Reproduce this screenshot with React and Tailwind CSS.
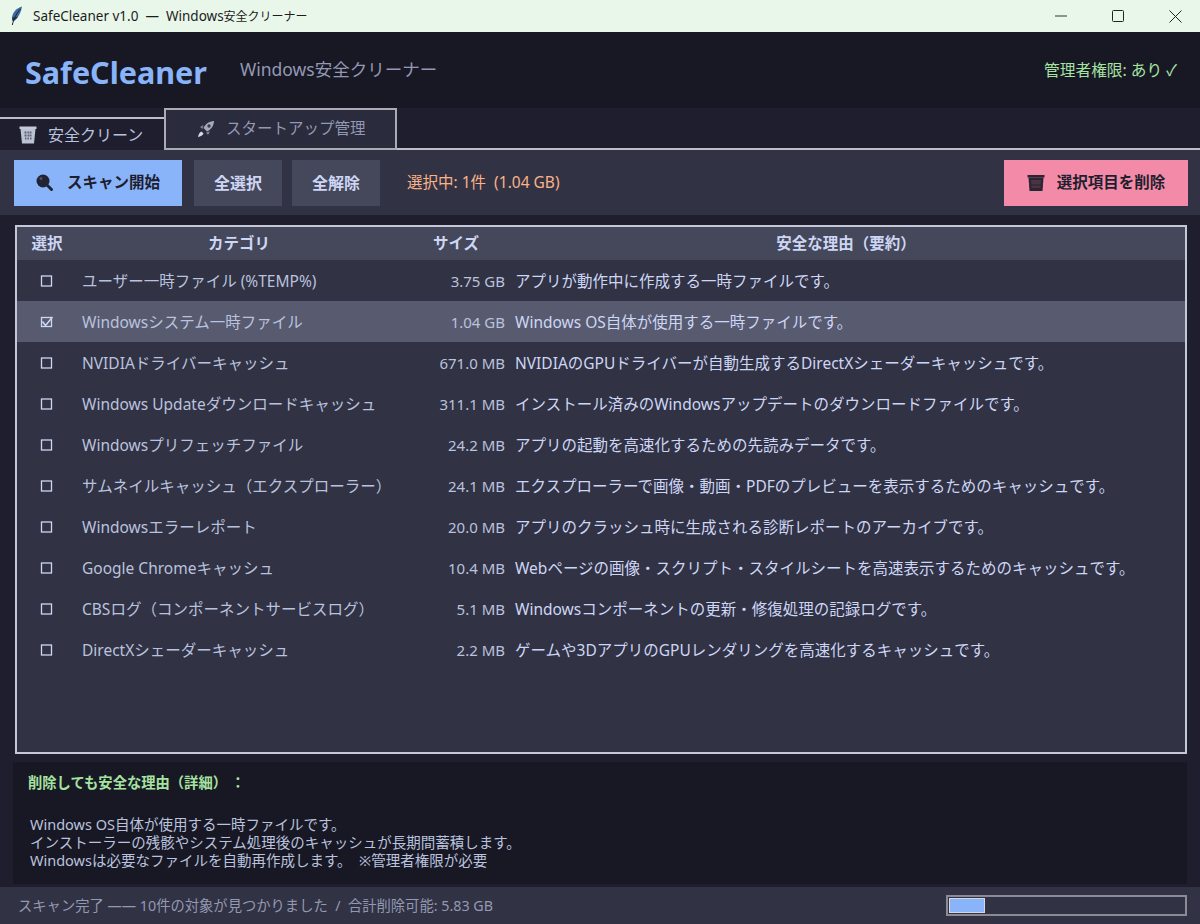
import React from 'react';

const rows = [
    ['ユーザー一時ファイル (%TEMP%)', '3.75 GB', 'アプリが動作中に作成する一時ファイルです。'],
    ['Windowsシステム一時ファイル', '1.04 GB', 'Windows OS自体が使用する一時ファイルです。', true],
    ['NVIDIAドライバーキャッシュ', '671.0 MB', 'NVIDIAのGPUドライバーが自動生成するDirectXシェーダーキャッシュです。'],
    ['Windows Updateダウンロードキャッシュ', '311.1 MB', 'インストール済みのWindowsアップデートのダウンロードファイルです。'],
    ['Windowsプリフェッチファイル', '24.2 MB', 'アプリの起動を高速化するための先読みデータです。'],
    ['サムネイルキャッシュ（エクスプローラー）', '24.1 MB', 'エクスプローラーで画像・動画・PDFのプレビューを表示するためのキャッシュです。'],
    ['Windowsエラーレポート', '20.0 MB', 'アプリのクラッシュ時に生成される診断レポートのアーカイブです。'],
    ['Google Chromeキャッシュ', '10.4 MB', 'Webページの画像・スクリプト・スタイルシートを高速表示するためのキャッシュです。'],
    ['CBSログ（コンポーネントサービスログ）', '5.1 MB', 'Windowsコンポーネントの更新・修復処理の記録ログです。'],
    ['DirectXシェーダーキャッシュ', '2.2 MB', 'ゲームや3DアプリのGPUレンダリングを高速化するキャッシュです。'],
];

const Feather = () => (
    <svg width="12" height="20" viewBox="0 0 12 20" className="shrink-0">
        <path d="M11 0.500C5.500 2 1.500 6.500 1 11.500c-.1 1.500.3 2.800 1 3.700C6.500 13 10 7 11 0.500z" fill="#3d6a9e" />
        <path d="M1 11.500c-.1 1.500.3 2.800 1 3.700 2-1 3.800-2.800 5.300-4.800z" fill="#28405f" />
        <path d="M9.500 3C6 7 3 11.500 1.300 19" stroke="#1b2430" strokeWidth="1" fill="none" />
    </svg>
);

const TrashLight = () => (
    <svg width="18" height="18" viewBox="0 0 18 18" className="shrink-0">
        <rect x="0.500" y="0.500" width="17" height="2.500" fill="#c3c8d6" />
        <path d="M1.500 3h15l-1.500 14.500H3z" fill="#bcc2d2" />
        <path d="M5.500 5.500h2v2h-2zM8.500 5.500h2v2h-2zM11 5.500h1.500v2H11zM5.500 8.500h2v2h-2zM8.500 8.500h2v2h-2zM11 8.500h1.500v2H11zM6 11.500h1.500v2H6zM8.500 11.500h1.500v2H8.500zM11 11.500h1.500v2H11z" fill="#5f6476" />
    </svg>
);

const TrashDark = () => (
    <svg width="18" height="18" viewBox="0 0 18 18" className="shrink-0">
        <rect x="0.500" y="1" width="17" height="2.500" fill="#2a2433" />
        <path d="M1.500 3.500h15l-1 13.500h-13z" fill="#2a2433" />
        <path d="M4 6h10l-.5 8h-9z" fill="#4a3342" />
        <path d="M4.200 11h9.600" stroke="#2a2433" strokeWidth="1" />
    </svg>
);

const Rocket = () => (
    <svg width="18" height="18" viewBox="0 0 18 18" className="shrink-0">
        <path d="M17 1c-5 .3-8.500 2.800-10.500 7l3.500 3.500C14.200 9.500 16.700 6 17 1z" fill="#a3aabf" />
        <circle cx="12" cy="6" r="1.700" fill="#3a3c4e" />
        <path d="M6.500 5 3 7l2.500 2zM13 11.500 11 15l-2-2.500z" fill="#7f859a" />
        <path d="M4.500 11.500C3 12 1.500 14 1 17c2.700-.4 4.800-1.800 5.500-3.500z" fill="#d7dbe6" />
    </svg>
);

const Magnifier = () => (
    <svg width="18" height="18" viewBox="0 0 18 18" className="shrink-0">
        <circle cx="7" cy="7" r="6.500" fill="#232433" />
        <path d="M11.500 11.500 15.500 15.500" stroke="#232433" strokeWidth="3" strokeLinecap="round" />
        <circle cx="5" cy="4.500" r="1.500" fill="#4c5066" />
    </svg>
);

const CheckBox = ({ checked }) => (
    <svg width="14" height="14" viewBox="0 0 14 14" className="shrink-0">
        <rect x="1.500" y={checked ? 2.500 : 2} width="10" height={checked ? 9 : 10} fill="none" stroke="#cdd6f4" strokeWidth="1.300" />
        {checked && <path d="M2.500 6.500l3 4L12.500 2" fill="none" stroke="#cdd6f4" strokeWidth="1.500" />}
    </svg>
);

const App = () => {
    return (
        <div className="w-[1200px] h-[924px] flex flex-col overflow-hidden bg-[#1e1e2e] text-[#cdd6f4] font-['Noto_Sans','Noto_Sans_CJK_JP',sans-serif]">
            {/* title bar */}
            <div className="h-8 shrink-0 bg-[#e8f7e9] flex items-center pl-[11px] text-[#1c1c1c] text-[13.500px]">
                <Feather />
                <span className="ml-[10px] whitespace-pre">SafeCleaner v1.0  —  Windows<span className="text-[12px]">安全クリーナー</span></span>
                <div className="ml-auto flex items-center">
                    <svg width="12" height="12" viewBox="0 0 12 12" className="mr-[45px]"><path d="M0 6h12" stroke="#333" strokeWidth="1" /></svg>
                    <svg width="12" height="12" viewBox="0 0 12 12" className="mr-[45px]"><rect x="0.500" y="0.500" width="11" height="11" rx="1" fill="none" stroke="#222" strokeWidth="1" /></svg>
                    <svg width="13" height="13" viewBox="0 0 13 13" className="mr-[18px]"><path d="M0.500 0.500l12 12M12.500 0.500l-12 12" stroke="#222" strokeWidth="1" /></svg>
                </div>
            </div>

            {/* header */}
            <div className="h-[76px] shrink-0 bg-[#181825] flex items-center pl-[25px] pr-[22px]">
                <span className="text-[30.500px] font-bold text-[#89b4fa] leading-none translate-y-[2px]">SafeCleaner</span>
                <span className="ml-[33px] text-[17.500px] text-[#9399b2] -translate-y-[1px]">Windows安全クリーナー</span>
                <span className="ml-auto text-[15.700px] text-[#a6e3a1] -translate-x-[1px] translate-y-[1px]">管理者権限: あり ✓</span>
            </div>

            {/* tabs */}
            <div className="h-[42px] shrink-0 flex items-end border-b-2 border-[#bdbfc8] relative">
                <div className="w-[164px] h-[33px] -mb-[2px] flex items-center pl-[19px] gap-[11px] border-t-2 border-[#bdbfc8] bg-[#1e1e2e] text-[16px] z-10">
                    <TrashLight />
                    <span className="text-[#bac2de]">安全クリーン</span>
                </div>
                <div className="w-[233px] h-[42px] -mb-[2px] flex items-center pl-[31px] gap-[11px] border-2 border-[#a9abb5] bg-[#2a2b3c] text-[15.500px] text-[#9399b2]">
                    <Rocket />
                    <span>スタートアップ管理</span>
                </div>
            </div>

            {/* toolbar */}
            <div className="h-[65px] shrink-0 bg-[#313244] flex items-center px-[14px]">
                <button className="w-[168px] h-[46px] bg-[#89b4fa] text-[#1e1e2e] text-[15.500px] font-bold flex items-center justify-center gap-[13px]">
                    <Magnifier />
                    スキャン開始
                </button>
                <button className="w-[88px] h-[46px] ml-3 bg-[#45475a] text-[#cdd6f4] text-[16px] font-bold">全選択</button>
                <button className="w-[88px] h-[46px] ml-[10px] bg-[#45475a] text-[#cdd6f4] text-[16px] font-bold">全解除</button>
                <span className="ml-[27px] text-[15.500px] text-[#fab387] whitespace-pre">選択中: 1件  (1.04 GB)</span>
                <button className="ml-auto mr-[-2px] w-[184px] h-[46px] bg-[#f38ba8] text-[#1e1e2e] text-[15.500px] font-bold flex items-center justify-center gap-[12px]">
                    <TrashDark />
                    選択項目を削除
                </button>
            </div>

            {/* table */}
            <div className="flex-1 min-h-0 flex flex-col px-[13px] pt-[10px]">
                <div className="h-[529px] ml-[2px] w-[1172px] border-2 border-[#c4c8d4] bg-[#313244] text-[15.500px]">
                    <div className="h-[33px] bg-[#45475a] flex items-center font-bold text-[#cdd6f4]">
                        <div className="w-[60px] text-center">選択</div>
                        <div className="w-[320px] text-center translate-x-[2px]">カテゴリ</div>
                        <div className="w-[118px] text-center">サイズ</div>
                        <div className="flex-1 text-center -translate-x-[4px]">安全な理由（要約）</div>
                    </div>
                    {rows.map((row) => (
                        <div key={row[0]} className={`h-[41px] flex items-center ${row[3] ? 'bg-[#585b70]' : ''}`}>
                            <div className="w-[60px] flex justify-center"><CheckBox checked={row[3]} /></div>
                            <div className="w-[322px] pl-[5px] pt-[2px] text-[#bac2de] whitespace-nowrap">{row[0]}</div>
                            <div className="w-[106px] pt-[2px] text-right text-[#bac2de] text-[15px]">{row[1]}</div>
                            <div className="flex-1 pl-[10px] pt-[2px] text-[#cdd6f4] whitespace-nowrap">{row[2]}</div>
                        </div>
                    ))}
                </div>

                {/* detail */}
                <div className="h-[122px] mt-[8px] bg-[#181825] pl-[15px] pt-[11px] text-[14.500px]">
                    <div className="font-bold text-[#a6e3a1] leading-5 text-[14.300px]">削除しても安全な理由（詳細） ：</div>
                    <div className="mt-[22px] ml-[2px] leading-[18px] text-[#bac2de] whitespace-pre">
                        {'Windows OS自体が使用する一時ファイルです。\nインストーラーの残骸やシステム処理後のキャッシュが長期間蓄積します。\nWindowsは必要なファイルを自動再作成します。  ※管理者権限が必要'}
                    </div>
                </div>
            </div>

            {/* status bar */}
            <div className="h-[37px] shrink-0 bg-[#313244] flex items-center pl-[18px] pr-[13px] text-[14.300px] text-[#9399b2]">
                <span className="whitespace-pre">スキャン完了 —— 10件の対象が見つかりました  /  合計削除可能: 5.83 GB</span>
                <div className="ml-auto w-[241px] h-[21px] border-2 border-[#8a8b96] p-[1px]">
                    <div className="w-[36px] h-full bg-[#89b4fa] border border-[#d6d8de]"></div>
                </div>
            </div>
        </div>
    );
};

export default App;
